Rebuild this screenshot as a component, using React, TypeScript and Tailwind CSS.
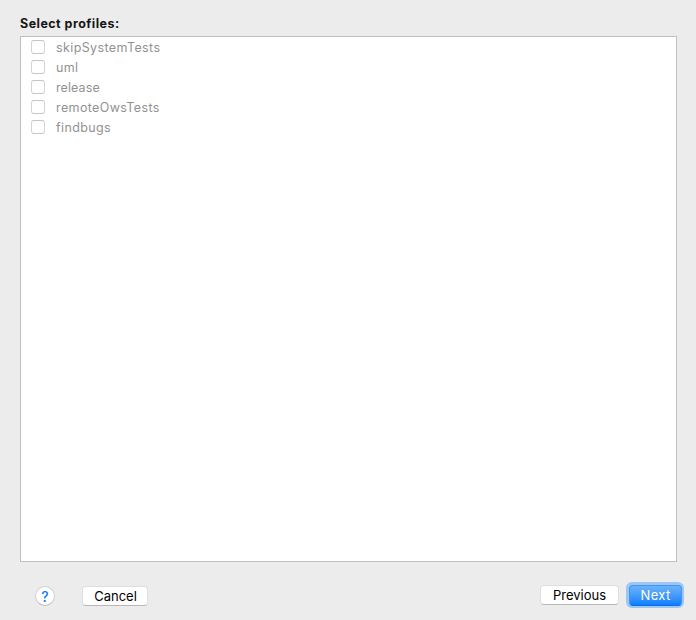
const profiles = ["skipSystemTests", "uml", "release", "remoteOwsTests", "findbugs"];
const button = "flex items-center justify-center rounded-[4px] border border-[#dedede] border-b-[#b8b8b8] bg-white pt-px text-[13px] text-black";

export default function App() {
  return (
    <div className="flex h-[620px] w-[696px] flex-col bg-[#ececec] font-['Inter',sans-serif]">
      <h1 className="ml-5 mt-[14px] h-[22px] text-[12.5px] font-bold leading-[19px] tracking-[0.46px] text-[#161616]">Select profiles:</h1>
      <ul className="ml-5 h-[526px] w-[657px] border border-[#c0c0c0] bg-white">
        {profiles.map((name) => (
          <li key={name} className="flex h-5 items-center pl-[10px] text-[12.5px] tracking-[0.38px] text-[#929292]">
            <span className="mr-[11px] h-[14px] w-[14px] rounded-[3px] border border-[#c4c4c4] border-x-[#d5d5d5] bg-white" />
            <span className={name === "release" ? "pt-[2px] leading-[18px] tracking-[0.1px]" : "pt-[2px] leading-[18px]"}>{name}</span>
          </li>
        ))}
      </ul>
      <div className="flex pl-[35px] pr-3 pt-[20px]">
        <button className="mt-1 flex h-5 w-5 items-center justify-center rounded-full border border-[#d0d0d0] border-b-[#b8b8b8] bg-white text-[14px] font-medium text-[#087eff]">?</button>
        <button className={button + " ml-[27px] mt-1 h-5 w-[66px]"}><span className="pl-px">Cancel</span></button>
        <button className={button + " ml-auto mt-[3px] h-5 w-[79px]"}>Previous</button>
        <button className="ml-[7px] flex h-[26px] w-[58px] rounded-[6px] bg-[#9dc7f2] p-[2.5px] text-[13px] text-white">
          <span className="flex h-full w-full items-center justify-center rounded-[4px] border border-[#3f96f5] border-b-[#0870ea] bg-linear-to-b from-[#6bb3fa] to-[#087eff] pl-px pt-px tracking-[0.3px]">Next</span>
        </button>
      </div>
    </div>
  );
}
